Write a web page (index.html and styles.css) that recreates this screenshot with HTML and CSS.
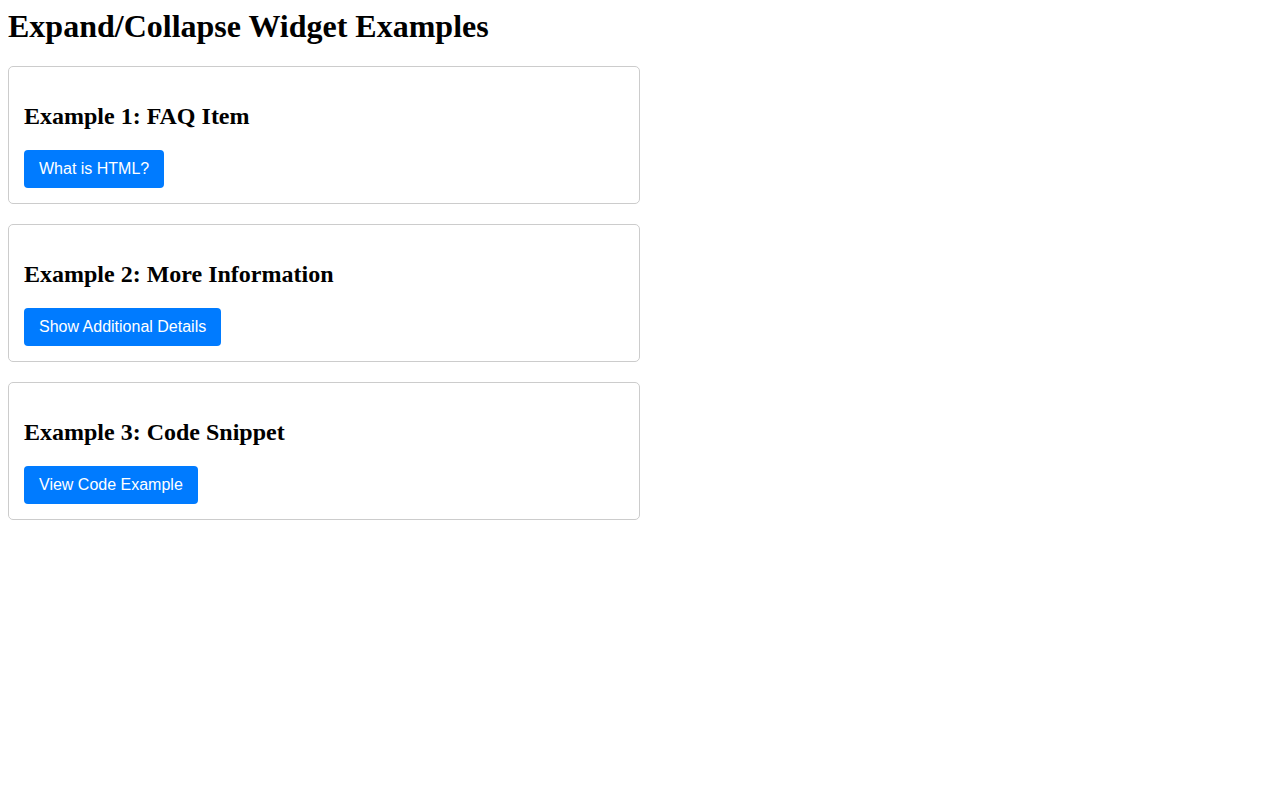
FILE: index.html
```html
<!DOCTYPE html>
<html>
<head>
  <title>Expand/Collapse Widget Examples</title>
  <link rel="stylesheet" href="styles.css">
</head>
<body>
  <h1>Expand/Collapse Widget Examples</h1>

  <div class="widget">
    <h2>Example 1: FAQ Item</h2>
    <button class="toggle-button">What is HTML?</button>
  </div>

  <div class="widget">
    <h2>Example 2: More Information</h2>
    <button class="toggle-button">Show Additional Details</button>
  </div>

  <div class="widget">
    <h2>Example 3: Code Snippet</h2>
    <button class="toggle-button">View Code Example</button>
  </div>
</body>
</html>
```

FILE: styles.css
```css
body {
  font-family: "Liberation Serif", "Times New Roman", serif;
  margin: 8px;
}

h1 {
  margin-top: 0;
  line-height: 37px;
}

h2 {
  line-height: 28px;
}

.widget {
  max-width: 600px;
  border: 1px solid #ccc;
  border-radius: 5px;
  padding: 15px;
  margin-bottom: 20px;
}

.toggle-button {
  background-color: #007bff;
  color: white;
  border: none;
  padding: 10px 15px;
  border-radius: 4px;
  cursor: pointer;
  font-family: "Liberation Sans", Arial, sans-serif;
  font-size: 16px;
  line-height: 18px;
}
```
